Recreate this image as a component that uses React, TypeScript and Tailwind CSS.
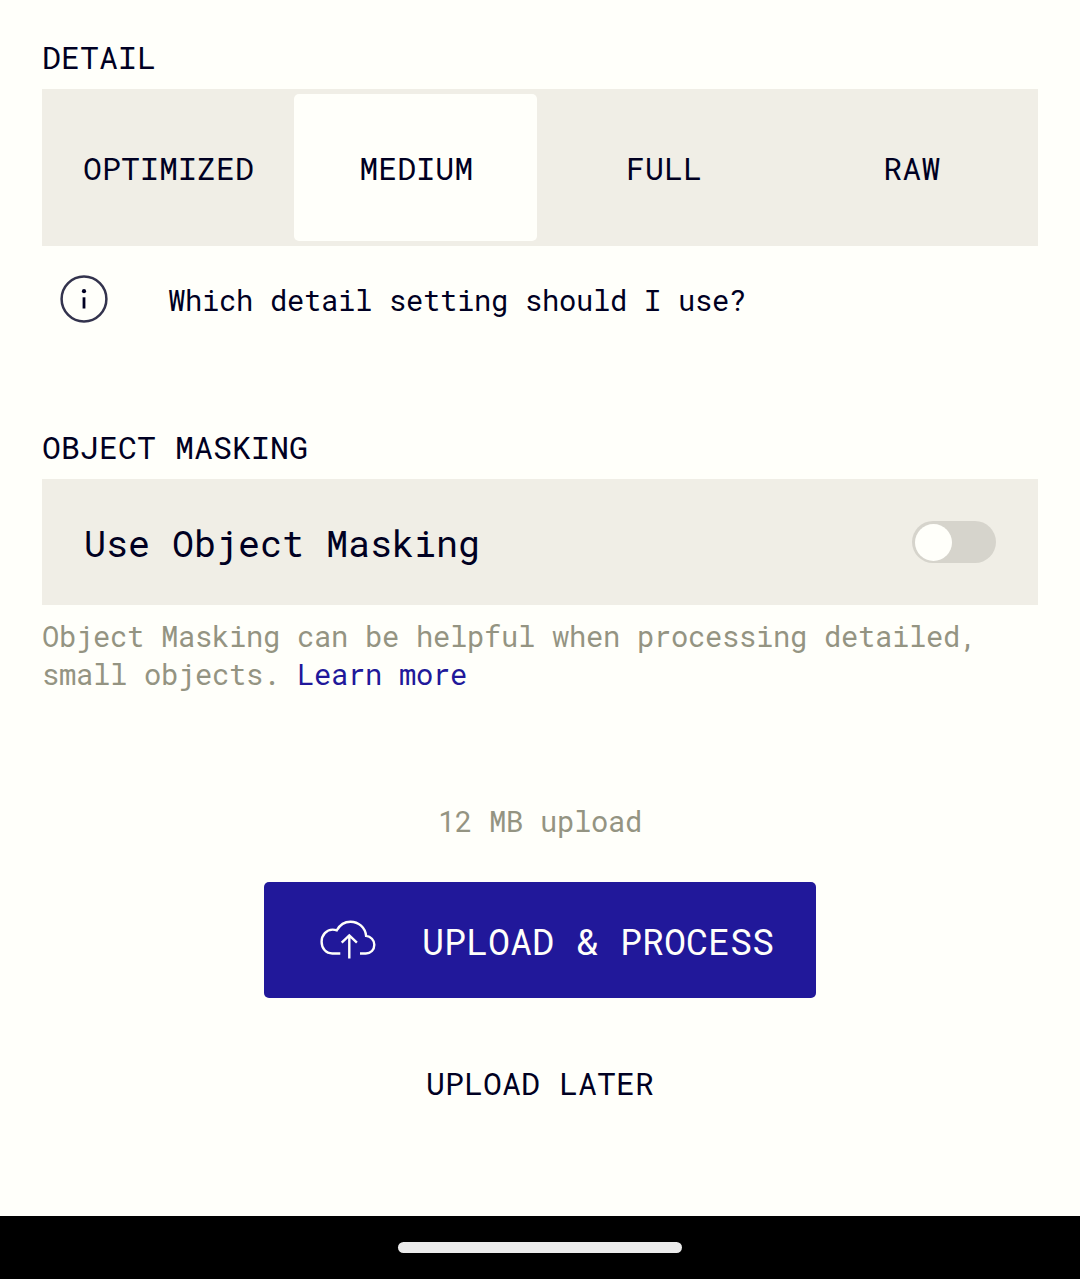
import React, { useState } from "react";

const DETAIL_LEVELS = ["OPTIMIZED", "MEDIUM", "FULL", "RAW"];

function InfoIcon() {
  return (
    <svg className="size-12 shrink-0" viewBox="0 0 48 48" fill="none">
      <circle cx="24" cy="24" r="22.4" stroke="#33334d" strokeWidth="2.5" />
      <circle cx="24" cy="16.2" r="2.1" fill="#000022" />
      <path d="M24 22.3V33.5" stroke="#000022" strokeWidth="2.8" />
    </svg>
  );
}

function CloudUploadIcon() {
  return (
    <svg
      className="mb-[2px] h-10 w-[58px] shrink-0"
      viewBox="0 0 58 40"
      fill="none"
      stroke="#fffffa"
      strokeWidth="2.4"
    >
      <path d="M21.3 34.5H13.3C6.8 34.5 2.6 29.2 2.6 22.8C2.6 15.8 7.5 10.6 13.6 10.6C15 10.6 16.4 10.8 17.8 11.3C20.8 5.8 25.8 2.7 31.5 2.7C39.6 2.7 46.3 8.7 47.1 16.9C51.7 17.4 55.3 21.2 55.3 25.7C55.3 30.8 51.9 34.5 46.8 34.5H41" />
      <path d="M30.3 39.5V16.5M22.7 23.6L30.3 16.3L37.9 23.6" />
    </svg>
  );
}

export default function App() {
  const [level, setLevel] = useState("MEDIUM");
  const [masking, setMasking] = useState(false);

  return (
    <div className="flex h-[1279px] w-[1080px] flex-col overflow-hidden bg-[#fffffa] font-['Roboto_Mono','Liberation_Mono',monospace] text-[#000022]">
      <main className="flex flex-1 flex-col px-[42px] pt-[36px]">
        <h2 className="h-[53px] text-[31.5px] leading-[42px] tracking-[0.097px]">DETAIL</h2>
        <div className="grid h-[157px] grid-cols-4 gap-[5px] bg-[#f0eee6] py-[5px] pr-[5.5px] pl-[4.5px]">
          {DETAIL_LEVELS.map((name) => (
            <button
              key={name}
              onClick={() => setLevel(name)}
              className={
                name === level
                  ? "rounded-[5px] bg-[#fffffa] pl-[1.5px] text-[31.5px] leading-[42px] tracking-[0.097px]"
                  : "rounded-[5px] pl-[1.5px] text-[31.5px] leading-[42px] tracking-[0.097px]"
              }
            >
              {name}
            </button>
          ))}
        </div>
        <div className="mt-[29px] flex h-12 items-center pl-[18px]">
          <InfoIcon />
          <span className="mt-[2px] ml-[60px] text-[28.875px] leading-[38px] tracking-[-0.32px]">
            Which detail setting should I use?
          </span>
        </div>

        <h2 className="mt-[103px] h-[53px] text-[31.5px] leading-[42px] tracking-[0.097px]">
          OBJECT MASKING
        </h2>
        <div className="flex h-[126px] items-center justify-between bg-[#f0eee6] px-[42px]">
          <span className="mt-[1px] text-[36.75px] leading-[48px] tracking-[-0.055px]">
            Use Object Masking
          </span>
          <button
            role="switch"
            aria-checked={masking}
            aria-label="Use Object Masking"
            onClick={() => setMasking(!masking)}
            className={
              masking
                ? "flex h-[42px] w-[84px] items-center justify-end rounded-full bg-[#21189a] px-[3px]"
                : "flex h-[42px] w-[84px] items-center rounded-full bg-[#d6d4cc] px-[3px]"
            }
          >
            <span className="size-[37px] rounded-full bg-[#fffffa]" />
          </button>
        </div>
        <p className="mt-[12px] text-[28.875px] leading-[38px] tracking-[-0.32px] text-[#949482]">
          Object Masking can be helpful when processing detailed,
          <br />
          small objects. <a className="text-[#21189a]">Learn more</a>
        </p>

        <p className="mt-[109px] text-center text-[28.875px] leading-[38px] tracking-[-0.32px] text-[#949482]">
          12 MB upload
        </p>
        <button className="mt-[42px] flex h-[116px] w-[552px] items-center self-center rounded-[5px] bg-[#21189a] pl-[55px] text-[#fffffa]">
          <CloudUploadIcon />
          <span className="mt-[1px] ml-[45px] text-[36.75px] leading-[48px] tracking-[-0.055px] whitespace-nowrap">
            UPLOAD &amp; PROCESS
          </span>
        </button>
        <button className="mt-[64px] self-center text-[31.5px] leading-[42px] tracking-[0.097px]">
          UPLOAD LATER
        </button>
      </main>
      <footer className="flex h-[63px] items-center justify-center bg-black">
        <div className="h-[11px] w-[284px] rounded-full bg-[#ebebeb]" />
      </footer>
    </div>
  );
}
